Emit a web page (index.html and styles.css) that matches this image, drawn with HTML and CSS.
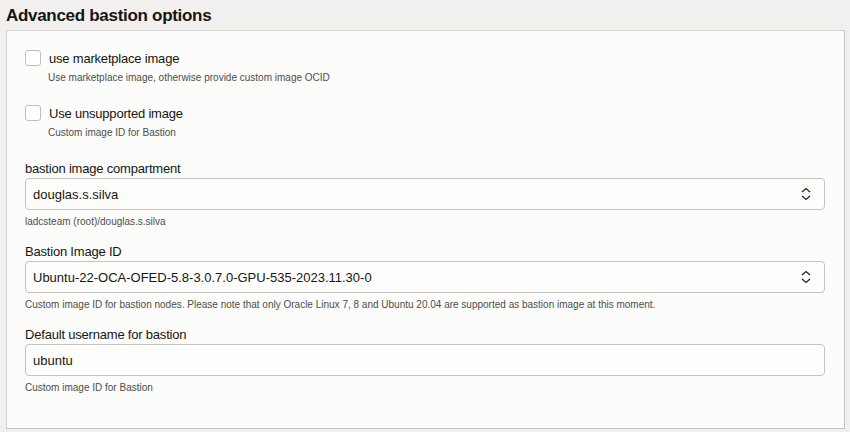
FILE: index.html
```html
<!DOCTYPE html>
<html lang="en">
<head>
<meta charset="UTF-8" />
<title>Advanced bastion options</title>
<link rel="stylesheet" href="styles.css">
</head>
<body>

<h2 class="section-title">Advanced bastion options</h2>
<div class="panel">
  <div class="check-field">
    <label class="check-row">
      <span class="checkbox"></span>
      <span>use marketplace image</span>
    </label>
    <div class="help indent">Use marketplace image, otherwise provide custom image OCID</div>
  </div>

  <div class="check-field">
    <label class="check-row">
      <span class="checkbox"></span>
      <span>Use unsupported image</span>
    </label>
    <div class="help indent">Custom image ID for Bastion</div>
  </div>

  <div class="field">
    <div class="field-label">bastion image compartment</div>
    <div class="control select">
      <span>douglas.s.silva</span>
      <svg class="updown" width="12" height="14" viewBox="0 0 12 14"><path d="M2 5 L6 1.5 L10 5 M2 9 L6 12.5 L10 9" fill="none" stroke="#222" stroke-width="1.3"/></svg>
    </div>
    <div class="help">ladcsteam (root)/douglas.s.silva</div>
  </div>

  <div class="field">
    <div class="field-label">Bastion Image ID</div>
    <div class="control select">
      <span>Ubuntu-22-OCA-OFED-5.8-3.0.7.0-GPU-535-2023.11.30-0</span>
      <svg class="updown" width="12" height="14" viewBox="0 0 12 14"><path d="M2 5 L6 1.5 L10 5 M2 9 L6 12.5 L10 9" fill="none" stroke="#222" stroke-width="1.3"/></svg>
    </div>
    <div class="help">Custom image ID for bastion nodes. Please note that only Oracle Linux 7, 8 and Ubuntu 20.04 are supported as bastion image at this moment.</div>
  </div>

  <div class="field">
    <div class="field-label">Default username for bastion</div>
    <div class="control">
      <span>ubuntu</span>
    </div>
    <div class="help">Custom image ID for Bastion</div>
  </div>
</div>

</body>
</html>
```

FILE: styles.css
```css
body {
  margin: 0;
  padding: 0 6px;
  background: #f1f0ee;
  color: #161513;
  font-family: "Liberation Sans", Arial, sans-serif;
}
.section-title {
  margin: 0;
  height: 30px;
  line-height: 31px;
  font-size: 17px;
  letter-spacing: -0.3px;
  font-weight: bold;
  color: #161513;
}
.panel {
  width: 839px;
  box-sizing: border-box;
  background: #fcfcfb;
  border: 1px solid #c7c3bf;
  border-top-color: #d6d2ce;
  border-left-color: #d6d2ce;
  padding: 19px 19px 33px 18px;
}
.check-field {
  margin-bottom: 20px;
}
.check-row {
  display: flex;
  align-items: center;
  height: 16px;
  font-size: 13px;
  letter-spacing: -0.2px;
}
.checkbox {
  width: 14px;
  height: 14px;
  border: 1px solid #c2beba;
  border-radius: 3px;
  background: #fff;
  margin-right: 8px;
}
.help {
  font-size: 10px;
  line-height: 14px;
  color: #4f4d4b;
  margin-top: 5px;
}
.help.indent {
  margin-left: 23px;
  margin-top: 5px;
}
.field {
  margin-bottom: 14px;
}
.field:last-child {
  margin-bottom: 0;
}
.field-label {
  font-size: 13px;
  letter-spacing: -0.2px;
  line-height: 18px;
}
.control {
  height: 32px;
  box-sizing: border-box;
  border: 1px solid #c7c3bf;
  border-radius: 4px;
  background: #fdfdfc;
  display: flex;
  align-items: center;
  justify-content: space-between;
  padding: 0 12px 0 7px;
  font-size: 13px;
}
.updown {
  display: block;
}
```
